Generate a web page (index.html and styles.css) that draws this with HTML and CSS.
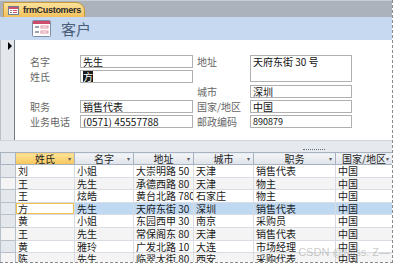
FILE: index.html
```html
<!DOCTYPE html>
<html lang="zh-CN">
    <head>
        <meta charset="utf-8">
        <title>frmCustomers</title>
        <link rel="stylesheet" href="styles.css">
    </head>
    <body>
        <div class="window">
            <div class="tabbar">
                <div class="tab">
                    <svg class="tab-icon" width="11" height="9" viewBox="0 0 11 9">
                        <rect x="0.5" y="0.5" width="10" height="8" fill="#fff" stroke="#6c7f99"/>
                        <rect x="1" y="1" width="9" height="2" fill="#d0506c"/>
                        <rect x="2" y="4" width="2" height="1" fill="#8a8a8a"/>
                        <rect x="5" y="4" width="4" height="1" fill="#d0506c"/>
                        <rect x="2" y="6" width="2" height="1" fill="#8a8a8a"/>
                        <rect x="5" y="6" width="4" height="1" fill="#d0506c"/>
                    </svg>
                    <span>frmCustomers</span>
                </div>
            </div>

            <div class="form-header">
                <svg class="header-icon" width="19" height="17" viewBox="0 0 19 17">
                    <rect x="0.5" y="0.5" width="18" height="16" rx="1" fill="#fdfdfd" stroke="#7d8ea6"/>
                    <rect x="1" y="1" width="17" height="3" fill="#cc4d69"/>
                    <rect x="3" y="6" width="4" height="2" fill="#9aa3ae"/>
                    <rect x="9" y="6" width="7" height="2" fill="#fff" stroke="#d77a90" stroke-width="0.8"/>
                    <rect x="3" y="11" width="4" height="2" fill="#9aa3ae"/>
                    <rect x="9" y="11" width="7" height="2" fill="#fff" stroke="#d77a90" stroke-width="0.8"/>
                </svg>
                <h1>客户</h1>
            </div>

            <div class="form-body">
                <div class="selector"><span class="arrow"></span></div>
                <div class="detail">
                    <label class="lbl r1 c1">名字</label>
                    <div class="box r1 c2">先生</div>
                    <label class="lbl r1 c4">地址</label>
                    <div class="box tall r1 c5">天府东街 30 号</div>

                    <label class="lbl r2 c1">姓氏</label>
                    <div class="box r2 c2"><span class="sel">方</span></div>

                    <label class="lbl r3 c4">城市</label>
                    <div class="box r3 c5">深圳</div>

                    <label class="lbl r4 c1">职务</label>
                    <div class="box r4 c2">销售代表</div>
                    <label class="lbl r4 c4">国家/地区</label>
                    <div class="box r4 c5">中国</div>

                    <label class="lbl r5 c1">业务电话</label>
                    <div class="box r5 c2">(0571) 45557788</div>
                    <label class="lbl r5 c4">邮政编码</label>
                    <div class="box r5 c5 small">890879</div>
                </div>
            </div>

            <div class="splitter"><span class="grip"></span></div>

            <table class="sheet">
                <colgroup>
                    <col style="width:15px">
                    <col style="width:59px">
                    <col style="width:59px">
                    <col style="width:60px">
                    <col style="width:60px">
                    <col style="width:82px">
                    <col style="width:57px">
                </colgroup>
                <thead>
                    <tr>
                        <th class="corner"></th>
                        <th class="active">姓氏<i>▾</i></th>
                        <th>名字<i>▾</i></th>
                        <th>地址<i>▾</i></th>
                        <th>城市<i>▾</i></th>
                        <th>职务<i>▾</i></th>
                        <th>国家/地区<i>▾</i></th>
                    </tr>
                </thead>
                <tbody>
                    <tr><td class="rs"></td><td>刘</td><td>小姐</td><td>大崇明路 50</td><td>天津</td><td>销售代表</td><td>中国</td></tr>
                    <tr class="alt"><td class="rs"></td><td>王</td><td>先生</td><td>承德西路 80</td><td>天津</td><td>物主</td><td>中国</td></tr>
                    <tr><td class="rs"></td><td>王</td><td>炫皓</td><td>黄台北路 780</td><td>石家庄</td><td>物主</td><td>中国</td></tr>
                    <tr class="current"><td class="rs"></td><td class="cur">方</td><td>先生</td><td>天府东街 30</td><td>深圳</td><td>销售代表</td><td>中国</td></tr>
                    <tr><td class="rs"></td><td>黄</td><td>小姐</td><td>东园西甲 30</td><td>南京</td><td>采购员</td><td>中国</td></tr>
                    <tr class="alt"><td class="rs"></td><td>王</td><td>先生</td><td>常保阁东 80</td><td>天津</td><td>销售代表</td><td>中国</td></tr>
                    <tr><td class="rs"></td><td>黄</td><td>雅玲</td><td>广发北路 10</td><td>大连</td><td>市场经理</td><td>中国</td></tr>
                    <tr class="alt"><td class="rs"></td><td>陈</td><td>先生</td><td>临翠大街 80</td><td>西安</td><td>采购代表</td><td>中国</td></tr>
                </tbody>
            </table>

            <div class="watermark">CSDN @Miss. Z—</div>
        </div>
    </body>
</html>
```

FILE: styles.css
```css
body {
    margin: 0;
    background-color: #ffffff;
    font-family: "Noto Sans CJK SC", "DejaVu Sans", sans-serif;
    font-size: 10px;
    color: #1a1a1a;
}

.window {
    position: relative;
    width: 392px;
    height: 262px;
    border-right: 1px dashed #8a8a8a;
    border-bottom: 1px dashed #8a8a8a;
    overflow: hidden;
    background-color: #ffffff;
}

/* document tab strip */
.tabbar {
    height: 17px;
    background-color: #abb2bc;
    border-top: 1px solid #c9ced5;
    box-sizing: border-box;
    display: flex;
    align-items: flex-end;
    padding-left: 3px;
}

.tab {
    height: 14px;
    width: 70px;
    padding-left: 4px;
    padding-right: 6px;
    display: flex;
    align-items: center;
    gap: 4px;
    background: linear-gradient(#fbe29c, #f3c15c);
    border: 1px solid #c89a3c;
    border-bottom: none;
    border-radius: 2px 9px 0 0;
    font-family: "Liberation Sans", Arial, sans-serif;
    font-weight: bold;
    font-size: 9px;
    letter-spacing: -0.3px;
    color: #2a2a2a;
}

.tab-icon {
    flex: none;
}

/* form header */
.form-header {
    height: 23px;
    background-color: #c7d9f0;
    display: flex;
    align-items: center;
    padding-left: 32px;
    gap: 10px;
}

.form-header h1 {
    margin: 0;
    font-size: 15px;
    line-height: 18px;
    font-weight: normal;
    color: #4a5e78;
}

/* detail section */
.form-body {
    display: flex;
    height: 100px;
}

.selector {
    width: 13px;
    border-left: 1px solid #b8bfc8;
    border-right: 1px solid #6f7a88;
    background-color: #e4e8ed;
    flex: none;
}

.arrow {
    display: block;
    margin: 2px 0 0 7px;
    width: 0;
    height: 0;
    border-top: 4px solid transparent;
    border-bottom: 4px solid transparent;
    border-left: 4px solid #000000;
}

.detail {
    display: grid;
    grid-template-columns: 50px 113px 4px 53px 102px;
    grid-template-rows: repeat(5, 13px);
    row-gap: 2px;
    padding: 15px 0 0 15px;
}

.lbl {
    color: #666666;
    line-height: 13px;
    white-space: nowrap;
}

.box {
    border: 1px solid #b0b0b0;
    padding-left: 2px;
    line-height: 11px;
    height: 13px;
    box-sizing: border-box;
    white-space: nowrap;
    overflow: hidden;
    color: #111111;
}

.box.tall {
    height: 27px;
    grid-row: 1 / span 2;
}

.box.small {
    font-size: 9px;
}

.sel {
    background-color: #1c1c1c;
    color: #ffffff;
}

.r1 { grid-row: 1; }
.r2 { grid-row: 2; }
.r3 { grid-row: 3; }
.r4 { grid-row: 4; }
.r5 { grid-row: 5; }
.c1 { grid-column: 1; }
.c2 { grid-column: 2; }
.c4 { grid-column: 4; }
.c5 { grid-column: 5; }

/* splitter between form and datasheet */
.splitter {
    height: 12px;
    background-color: #e6e9ee;
    border-top: 1px solid #d0d5dc;
    box-sizing: border-box;
    display: flex;
    justify-content: flex-end;
    align-items: flex-end;
    padding-right: 67px;
}

.grip {
    width: 22px;
    height: 1px;
    margin-bottom: 1px;
    border-top: 1px dotted #5b6b80;
}

/* datasheet */
.sheet {
    border-collapse: collapse;
    table-layout: fixed;
    width: 392px;
}

.sheet th,
.sheet td {
    height: 11.6px;
    padding: 0 2px;
    white-space: nowrap;
    overflow: hidden;
    line-height: 11.6px;
    font-weight: normal;
    text-align: left;
}

.sheet th {
    position: relative;
    height: 11px;
    line-height: 11px;
    text-align: center;
    background: linear-gradient(#f3f5f8, #dfe4ea);
    border: 1px solid #a9b3bf;
    color: #222222;
}

.sheet th i {
    position: absolute;
    right: 3px;
    top: 0;
    font-style: normal;
    font-size: 6px;
    color: #555555;
}

.sheet th.active {
    background: linear-gradient(#fde49a, #f7c65a);
}

.sheet th.corner {
    background: #e4e8ed;
}

.sheet td {
    border: 1px solid #d9dde3;
    color: #1a1a1a;
}

.sheet tr.alt td {
    background-color: #f4f4f4;
}

.sheet td.rs {
    background-color: #e4e8ed;
    border-color: #b8c0ca;
}

.sheet tr.current td {
    background-color: #c0d9f3;
}

.sheet tr.current td.cur {
    background-color: #ffffff;
    box-shadow: inset 0 0 0 1px #f0c24e;
}

.sheet tr.current td.rs {
    background-color: #e4e8ed;
}

.watermark {
    position: absolute;
    right: 2px;
    bottom: 4px;
    font-family: "Liberation Sans", Arial, sans-serif;
    font-size: 11px;
    color: rgba(120, 120, 120, 0.4);
}
```
